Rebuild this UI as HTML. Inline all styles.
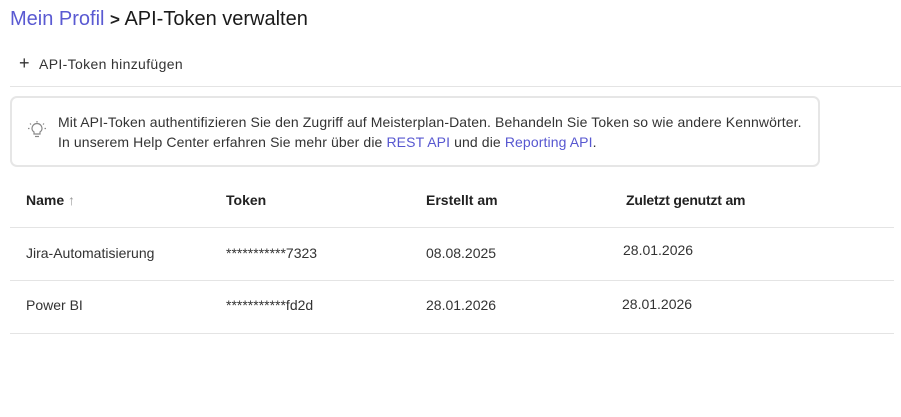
<!DOCTYPE html><html><head><meta charset="utf-8"><style>
body{margin:0;width:901px;height:417px;background:#fff;font-family:"Liberation Sans",sans-serif;color:#222;position:relative;overflow:hidden}
.a{position:absolute;white-space:nowrap;font-size:14px;line-height:16px}
.l{position:absolute;height:1px;background:#e4e4e4}
a{color:#5757d0;text-decoration:none}
</style></head><body>
<div class="a" style="left:10px;top:7px;font-size:20px;line-height:24px"><span style="color:#5a5ad2">Mein Profil</span> <span style="font-size:17px;font-weight:bold">&gt;</span> <span style="color:#1a1a1a">API-Token verwalten</span></div>
<div class="a" style="left:19px;top:55px;color:#333"><span style="font-size:18px;display:inline-block;width:20px">+</span><span style="letter-spacing:0.35px">API-Token hinzufügen</span></div>
<div class="l" style="left:10px;top:86px;width:891px"></div>
<div style="position:absolute;left:10px;top:96px;width:806px;height:67px;border:2px solid #e6e6e6;border-radius:7px"></div>
<svg style="position:absolute;left:27px;top:120px" width="20" height="20" viewBox="0 0 20 20" fill="none" stroke="#888" stroke-width="1.2"><path d="M7 12c-1.5-1-2-2.3-2-3.5a5 5 0 0 1 10 0c0 1.2-.5 2.5-2 3.5v2H7z"/><path d="M8 16.5h4"/><path d="M10 1v1.5M3 3.5l1 1M17 3.5l-1 1M1 8.5h1.5M17.5 8.5H19"/></svg>
<div class="a" style="left:58px;top:112px;color:#333;line-height:20px;letter-spacing:0.11px">Mit API-Token authentifizieren Sie den Zugriff auf Meisterplan-Daten. Behandeln Sie Token so wie andere Kennwörter.<br>In unserem Help Center erfahren Sie mehr über die <a>REST API</a> und die <a>Reporting API</a>.</div>
<div class="a" style="left:26px;top:192px;font-weight:bold;color:#222">Name <span style="color:#999;font-weight:normal">↑</span></div>
<div class="a" style="left:226px;top:192px;font-weight:bold">Token</div>
<div class="a" style="left:426px;top:192px;font-weight:bold">Erstellt am</div>
<div class="a" style="left:626px;top:192px;font-weight:bold;letter-spacing:-0.2px">Zuletzt genutzt am</div>
<div class="l" style="left:10px;top:227px;width:884px"></div>
<div class="a" style="left:26px;top:245px;color:#333">Jira-Automatisierung</div>
<div class="a" style="left:226px;top:245px;color:#333">***********7323</div>
<div class="a" style="left:426px;top:245px;color:#333">08.08.2025</div>
<div class="a" style="left:623px;top:242px;color:#333">28.01.2026</div>
<div class="l" style="left:10px;top:280px;width:884px"></div>
<div class="a" style="left:26px;top:297px;color:#333">Power BI</div>
<div class="a" style="left:226px;top:297px;color:#333">***********fd2d</div>
<div class="a" style="left:426px;top:297px;color:#333">28.01.2026</div>
<div class="a" style="left:622px;top:296px;color:#333">28.01.2026</div>
<div class="l" style="left:10px;top:333px;width:884px"></div>
</body></html>
